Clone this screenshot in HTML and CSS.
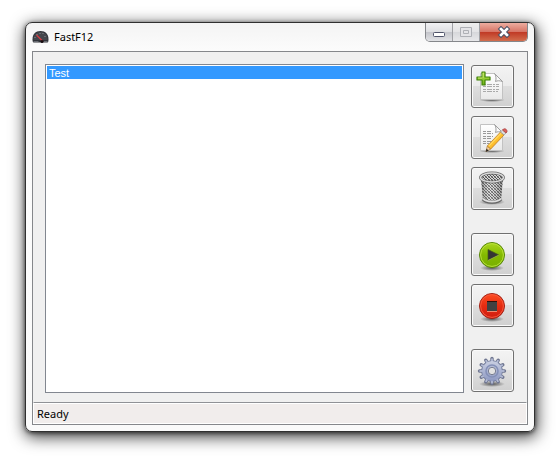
FILE: index.html
```html
<!DOCTYPE html>
<html lang="en">
<head>
<meta charset="utf-8">
<title>FastF12</title>
<link rel="stylesheet" href="styles.css">
</head>
<body>
<main class="window">
  <header class="titlebar">
    <svg class="app-icon" viewBox="0 0 16 16" aria-hidden="true">
      <path d="M0 10.500C0 5 3 2 8 2s8 3 8 8.500c0 2-.5 3-1 3H1c-.5 0-1-1-1-3z" fill="#303238"/>
      <path d="M1 9C1.500 5 4 3 8 3s6.500 2 7 6v2H1z" fill="#44464c"/>
      <path d="M2 8.500h1M4 5.500h1M7 4.500h1M10 4.500h1M12 7.500h1" stroke="#8b8e94"/>
      <path d="M1 12.500h5M11 12.500h4" stroke="#696c73"/>
      <path d="M4 6l6 6" stroke="#d83a42" stroke-width="1.200"/>
      <circle cx="9.500" cy="12.500" r="1.500" fill="#160c10"/>
    </svg>
    <h1 class="title">FastF12</h1>
    <div class="caption-buttons">
      <button class="caption minimize" type="button" aria-label="Minimize">
        <svg viewBox="0 0 14 12"><rect x="1.500" y="6.500" width="11" height="4" rx="1" fill="#fff" stroke="#50546a"/></svg>
      </button>
      <button class="caption maximize" type="button" aria-label="Maximize" disabled>
        <svg viewBox="0 0 14 12"><path d="M1.500 1.500h11v9h-11zM4.500 4.500h5v3h-5z" fill="#e4e4e7" stroke="#aeb0b5"/></svg>
      </button>
      <button class="caption close" type="button" aria-label="Close">
        <svg viewBox="0 0 14 12"><path d="M4 3l6 6M10 3l-6 6" stroke="#4d5366" stroke-width="4.600" stroke-linecap="square"/><path d="M4 3l6 6M10 3l-6 6" stroke="#fff" stroke-width="2.600" stroke-linecap="square"/></svg>
      </button>
    </div>
  </header>
  <div class="client">
    <div class="content">
      <select class="profiles" size="2" aria-label="Profiles">
        <option selected>Test</option>
      </select>
      <div class="tools">
        <div class="group">
          <button class="tool" type="button" aria-label="Add">
            <svg viewBox="0 0 32 32">
              <defs>
                <linearGradient id="paper" x2="0" y2="1"><stop stop-color="#fff"/><stop offset="1" stop-color="#e9e9e9"/></linearGradient>
                <linearGradient id="plus" x2="0" y2="1"><stop stop-color="#c2e858"/><stop offset="1" stop-color="#68ae12"/></linearGradient>
                <radialGradient id="shade"><stop stop-color="#000" stop-opacity=".6"/><stop offset="1" stop-color="#000" stop-opacity="0"/></radialGradient>
              </defs>
              <ellipse cx="16" cy="29" rx="13" ry="2" fill="url(#shade)"/>
              <path d="M4.500 2.500h14l8 8v18h-22z" fill="url(#paper)" stroke="#c2c2c2"/>
              <path d="M18.500 2.500l8 8c-3-1-5-1-7 0 1-3 .5-6-1-8z" fill="#fafafa" stroke="#9e9e9e"/>
              <path d="M7 13.500h17M7 15.500h17M7 18.500h17M7 20.500h15" stroke="#aaa" stroke-dasharray="3 1 5 1 2 1"/>
              <path d="M6 1h3v5h5v3H9v5H6V9H1V6h5z" fill="url(#plus)" stroke="#3f8208" stroke-width="1.200" stroke-linejoin="round"/>
              <path d="M7 2v5M2 7h4" stroke="#d6f086" stroke-width=".7"/>
            </svg>
          </button>
          <button class="tool" type="button" aria-label="Edit">
            <svg viewBox="0 0 32 32">
              <defs><linearGradient id="wood" x2="1" y2="1"><stop stop-color="#ffdb62"/><stop offset=".5" stop-color="#ffc330"/><stop offset="1" stop-color="#dc780e"/></linearGradient></defs>
              <ellipse cx="16" cy="29" rx="13" ry="2" fill="url(#shade)"/>
              <path d="M4.500 2.500h14l8 8v18h-22z" fill="url(#paper)" stroke="#c2c2c2"/>
              <path d="M18.500 2.500l8 8c-3-1-5-1-7 0 1-3 .5-6-1-8z" fill="#fafafa" stroke="#9e9e9e"/>
              <path d="M7 9.500h8M7 11.500h10M7 14.500h10M7 16.500h9M7 19.500h8M7 21.500h6" stroke="#999" stroke-dasharray="3 1 4 1"/>
              <path d="M10 29.500l1.300-5.500 3.500 3z" fill="#f4d2a0" stroke="#94601c" stroke-width=".6"/>
              <path d="M9.800 29.800l.8-3 2 1.700z" fill="#202020"/>
              <path d="M11.300 24L24.500 10l3.500 3-13.200 14z" fill="url(#wood)" stroke="#b9761a" stroke-width=".7"/>
              <path d="M12.800 24L25.400 11" stroke="#ffe68b" stroke-width=".8"/>
              <path d="M24.500 10l2-2 3.500 3-2 2z" fill="#ddd" stroke="#888" stroke-width=".6"/>
              <path d="M26.500 8l1-1c2-1 4 1 3.500 3l-1 1z" fill="#d9605c" stroke="#a43c3c" stroke-width=".7"/>
            </svg>
          </button>
          <button class="tool" type="button" aria-label="Delete">
            <svg viewBox="0 0 32 32">
              <defs>
                <pattern id="mesh" width="3" height="3" patternUnits="userSpaceOnUse"><rect width="3" height="3" fill="#d8d8d8"/><path d="M0 0h1l1 1v1H1L0 1zM2 2h1v1H2z" fill="#4e4e4e"/></pattern>
                <linearGradient id="metal"><stop stop-color="#333" stop-opacity=".5"/><stop offset=".4" stop-color="#fff" stop-opacity=".15"/><stop offset="1" stop-color="#333" stop-opacity=".4"/></linearGradient>
              </defs>
              <ellipse cx="16" cy="29" rx="13" ry="3" fill="url(#shade)"/>
              <path d="M5 5l2 22c3 4 15 4 18 0l2-22z" fill="url(#mesh)"/>
              <path d="M5 5l2 22c3 4 15 4 18 0l2-22z" fill="url(#metal)"/>
              <path d="M7 26c3 4 15 4 18 0" fill="none" stroke="#666" stroke-width="3.400"/>
              <path d="M7 25.500c3 4 15 4 18 0" fill="none" stroke="#e0e0e0" stroke-width="2"/>
              <ellipse cx="16" cy="4.500" rx="11.500" ry="4.500" fill="url(#mesh)" stroke="#666" stroke-width="2.800"/>
              <ellipse cx="16" cy="4.500" rx="11.500" ry="4.500" fill="none" stroke="#ddd" stroke-width="1.400"/>
            </svg>
          </button>
        </div>
        <div class="group">
          <button class="tool" type="button" aria-label="Start">
            <svg viewBox="0 0 32 32">
              <defs><linearGradient id="green" x2="0" y2="1"><stop stop-color="#acd81e"/><stop offset=".5" stop-color="#83b900"/><stop offset="1" stop-color="#78b000"/></linearGradient></defs>
              <ellipse cx="16" cy="29" rx="12" ry="3" fill="url(#shade)"/>
              <circle cx="16" cy="16" r="12.500" fill="url(#green)" stroke="#568606"/>
              <circle cx="16" cy="16" r="11.400" fill="none" stroke="#b9e03c"/>
              <path d="M12 10.500v11L23 16z" fill="#353535" stroke="#465c14" stroke-width=".7"/>
              <path d="M12 21.500L23 16" stroke="#c8ec50" stroke-width=".6"/>
            </svg>
          </button>
          <button class="tool" type="button" aria-label="Stop">
            <svg viewBox="0 0 32 32">
              <defs><linearGradient id="red" x2="0" y2="1"><stop stop-color="#ff4c20"/><stop offset=".5" stop-color="#e42c12"/><stop offset="1" stop-color="#cf1c10"/></linearGradient></defs>
              <ellipse cx="16" cy="29" rx="12" ry="3" fill="url(#shade)"/>
              <circle cx="16" cy="16" r="12.500" fill="url(#red)" stroke="#a02014"/>
              <circle cx="16" cy="16" r="11.400" fill="none" stroke="#f9583c"/>
              <path d="M11 11h10v10H11z" fill="#414141"/>
              <path d="M11 11.500h10" stroke="#301008"/><path d="M11 21.500h10" stroke="#f08a70"/>
            </svg>
          </button>
        </div>
        <div class="group">
          <button class="tool" type="button" aria-label="Settings">
            <svg viewBox="0 0 32 32">
              <defs>
                <linearGradient id="steel" x2="0" y2="1"><stop stop-color="#c9cfe2"/><stop offset="1" stop-color="#8e99c2"/></linearGradient>
                <g id="teeth"><path id="tooth" d="M16 3.500v25"/><use href="#tooth" transform="rotate(30 16 16)"/><use href="#tooth" transform="rotate(60 16 16)"/><use href="#tooth" transform="rotate(90 16 16)"/><use href="#tooth" transform="rotate(120 16 16)"/><use href="#tooth" transform="rotate(150 16 16)"/></g>
              </defs>
              <ellipse cx="16" cy="29" rx="13" ry="3" fill="url(#shade)"/>
              <g stroke="#6f7690" stroke-width="3.400" stroke-linecap="round"><use href="#teeth"/></g>
              <circle cx="16" cy="16" r="10.800" fill="#7780a0"/>
              <g stroke="#b4bcd6" stroke-width="1.800"><use href="#teeth"/></g>
              <circle cx="16" cy="16" r="10" fill="url(#steel)"/>
              <circle cx="16" cy="16" r="6" fill="none" stroke="#8490b8" stroke-width="1.600"/>
              <circle cx="16" cy="16" r="3.700" fill="#e2e2e2" stroke="#777d91"/>
            </svg>
          </button>
        </div>
      </div>
    </div>
    <footer class="status">Ready</footer>
  </div>
</main>
</body>
</html>
```
FILE: styles.css
```css
* { box-sizing: border-box; }

body {
  display: flex;
  min-height: 100vh;
  margin: 0;
  padding: 22px 21px 39px 25px;
  background: #fff;
  color: #000;
  font: 11px/16px "Noto Sans", sans-serif;
}

.window {
  display: flex;
  flex: 1;
  flex-direction: column;
  padding: 0 6px 6px;
  border: 1px solid #303030;
  border-radius: 7px;
  background: linear-gradient(#f4f4f4, #fcfcfc 30px, #fafafa);
  box-shadow: 0 1px 4px rgba(0, 0, 0, .6), 1px 4px 16px 1px rgba(0, 0, 0, .75);
}

.titlebar {
  display: flex;
  height: 28px;
  align-items: center;
}

.app-icon {
  width: 17px;
  height: 16px;
  margin-right: 5px;
}

.title {
  flex: 1;
  margin: 0;
  font-size: 11px;
  font-weight: 400;
}

.caption-buttons {
  display: flex;
  align-self: flex-start;
  height: 19px;
  border: 1px solid #85878b;
  border-top: 0;
  border-radius: 0 0 5px 5px;
  overflow: hidden;
}

.caption {
  display: flex;
  width: 27px;
  padding: 0;
  align-items: center;
  justify-content: center;
  border: 0;
  border-right: 1px solid #a0a1a5;
  background: linear-gradient(#f1f1f3, #dedfe2 48%, #c3c4ca 50%, #e1e2e5);
}

.caption svg {
  width: 14px;
  height: 12px;
}

.maximize { background: linear-gradient(#eee, #e4e4e6 48%, #d6d7da 50%, #e8e8ea); }

.close {
  width: 47px;
  border: 0;
  background: linear-gradient(#edada0, #d77566 48%, #c03824 50%, #d26d4d);
}

.client {
  display: flex;
  flex: 1;
  flex-direction: column;
  border: 1px solid #85878b;
  background: #f0f0f0;
}

.content {
  display: flex;
  flex: 1;
  gap: 7px;
  padding: 12px 13px 9px 12px;
}

.profiles {
  flex: 1;
  min-width: 0;
  margin: 0;
  padding: 1px;
  border: 1px solid #828790;
  border-radius: 0;
  outline: 0;
  background: #fff;
  font: 11px/12px "Liberation Sans", sans-serif;
  overflow: hidden;
}

.profiles option {
  min-height: 13px;
  padding: 1px 2px 0;
}

.profiles option:checked {
  background: #39f linear-gradient(#39f, #39f);
  color: #fff;
  -webkit-text-fill-color: #fff;
}

.tools {
  display: flex;
  flex-direction: column;
  justify-content: space-between;
  padding: 1px 0;
}

.group {
  display: flex;
  flex-direction: column;
  gap: 8px;
}

.tool {
  display: flex;
  width: 43px;
  height: 43px;
  padding: 1px 1px 0 0;
  align-items: center;
  justify-content: center;
  border: 1px solid #707070;
  border-radius: 3px;
  background: linear-gradient(#f3f3f3, #ebebeb 49%, #dedede 50%, #d0d0d0);
  box-shadow: inset 0 0 0 1px #fafafa;
}

.tool svg {
  width: 32px;
  height: 32px;
  overflow: visible;
}

.status {
  height: 22px;
  padding: 3px;
  border: 1px solid #fff;
  border-top-color: #909296;
  background: #f1edec;
  box-shadow: inset 0 1px #fff;
}
```
